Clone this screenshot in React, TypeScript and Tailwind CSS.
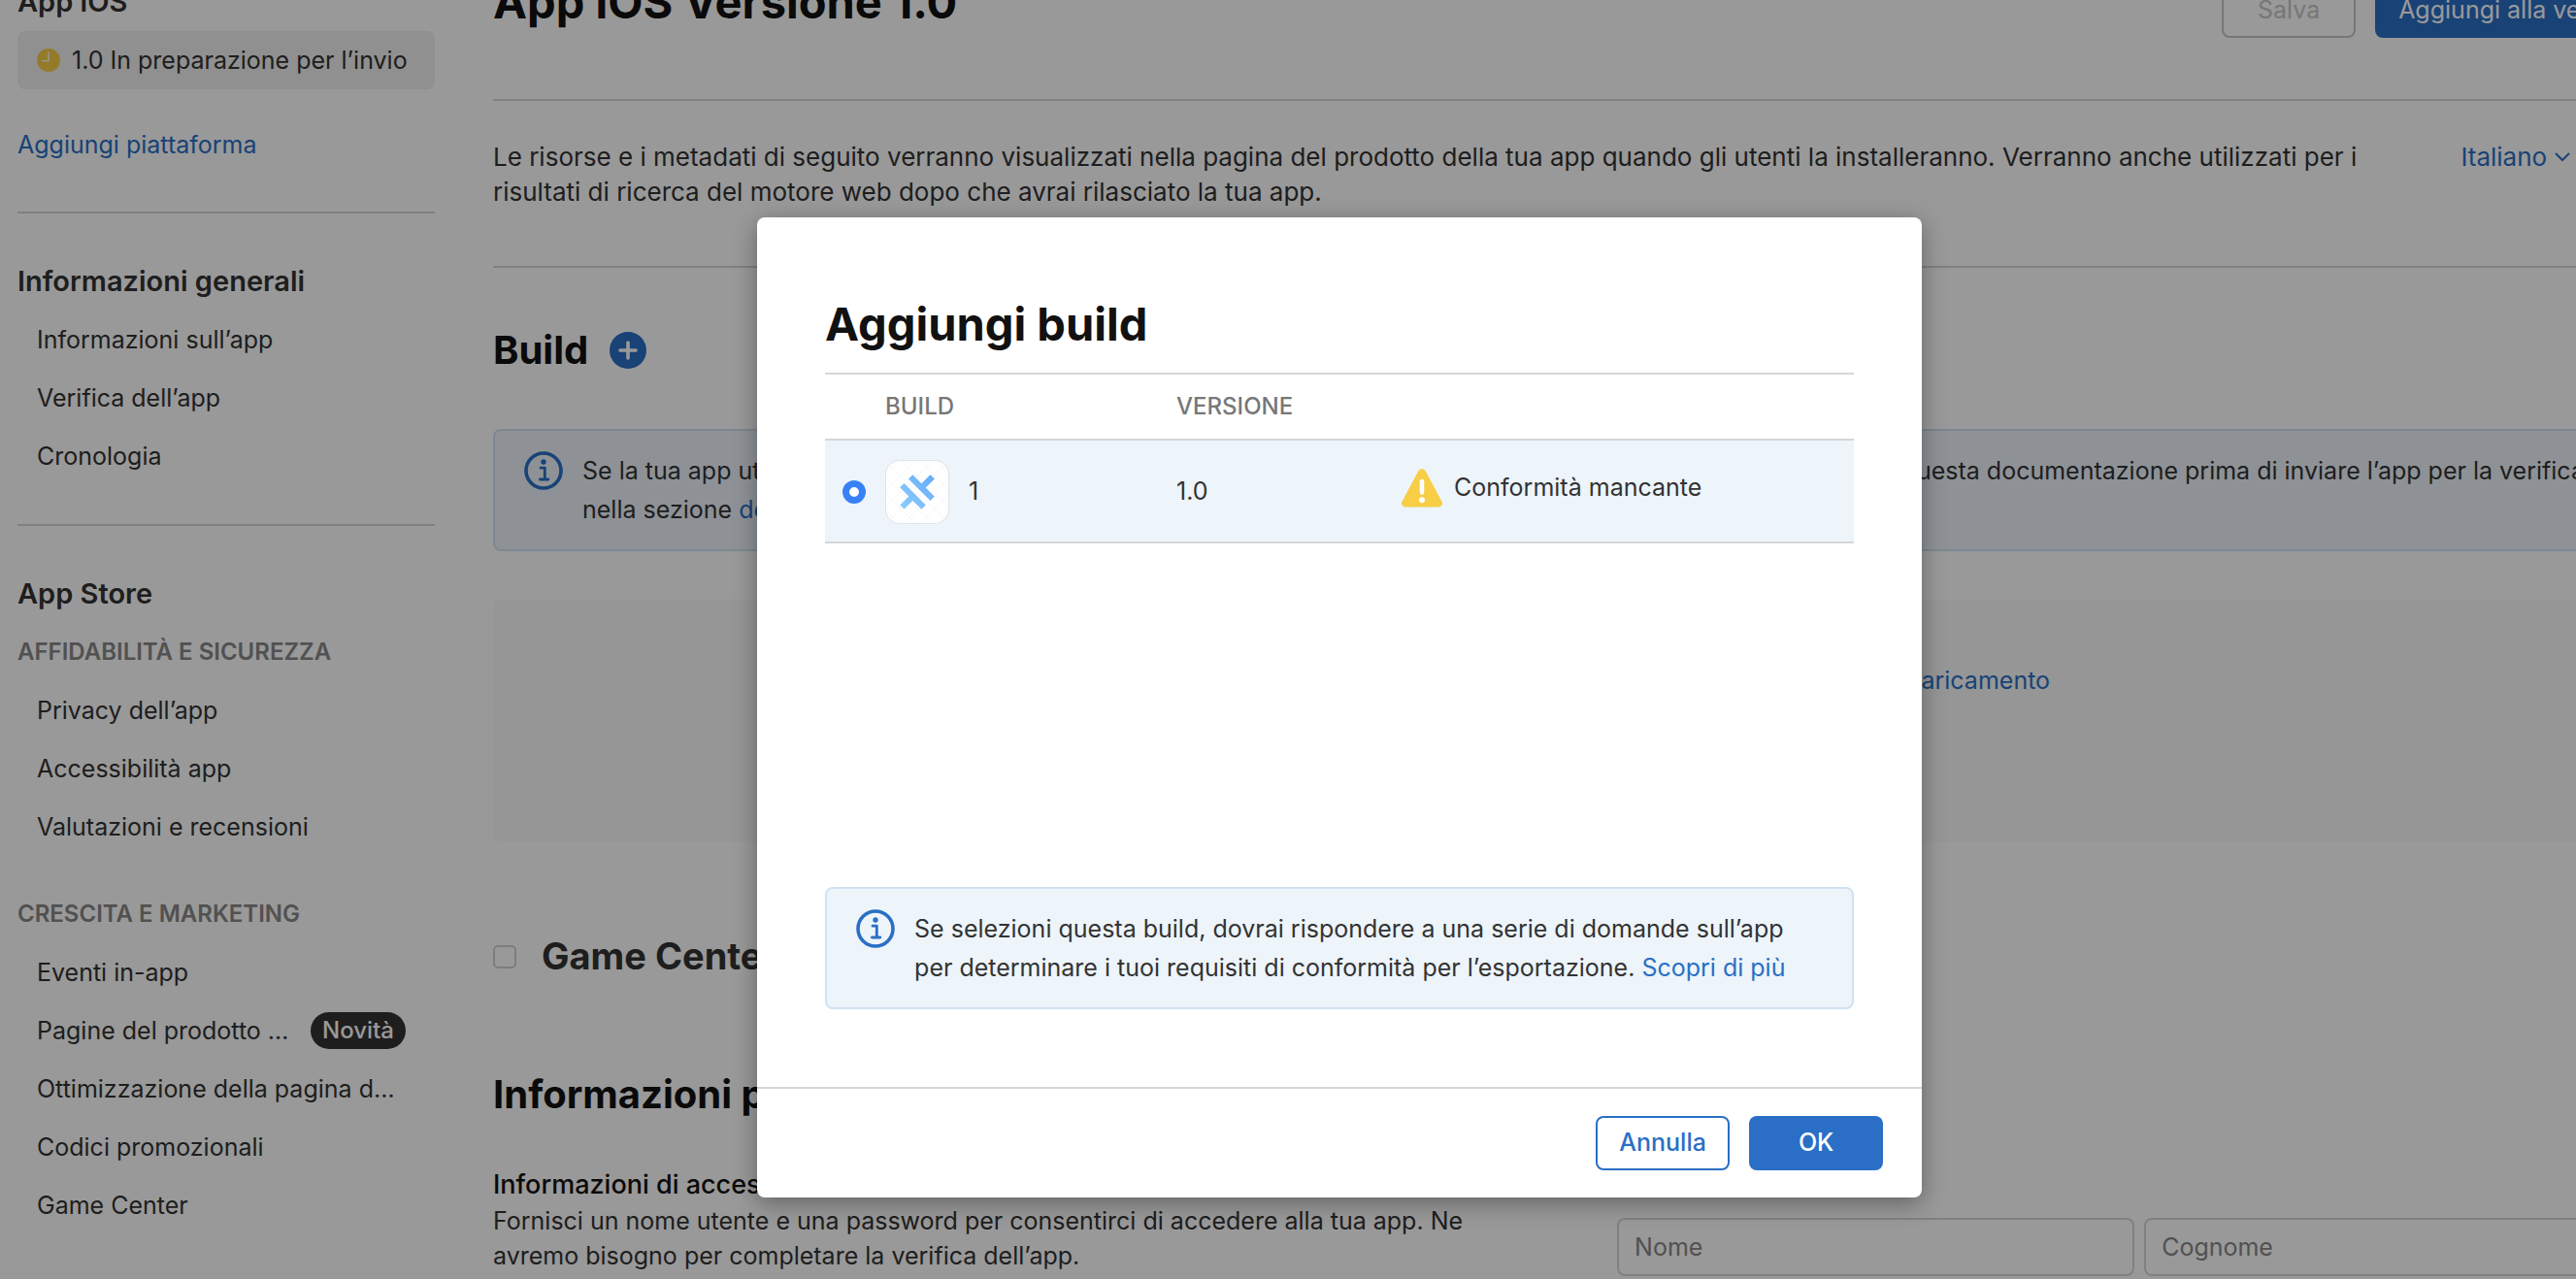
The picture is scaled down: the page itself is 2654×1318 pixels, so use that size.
import type { ReactNode } from "react";

function InfoIcon() {
  return (
    <svg viewBox="0 0 40 40" className="size-10 shrink-0" aria-hidden="true">
      <circle cx="20" cy="20" r="18" fill="none" stroke="#2a6fc5" strokeWidth="3.6" />
      <circle cx="20" cy="11" r="2.7" fill="#2a6fc5" />
      <path
        d="M17 17.2h4.3v11.6M16.400 29h8.400"
        fill="none"
        stroke="#2a6fc5"
        strokeWidth="2.8"
        strokeLinecap="round"
        strokeLinejoin="round"
      />
    </svg>
  );
}

function ClockIcon() {
  return (
    <svg viewBox="0 0 24 24" className="size-6 shrink-0" aria-hidden="true">
      <circle cx="12" cy="12" r="12" fill="#f7ce46" />
      <path d="M12 4v8.6H5.5" fill="none" stroke="#fff" strokeWidth="1.4" strokeLinecap="round" />
    </svg>
  );
}

function HelpIcon() {
  return (
    <svg viewBox="0 0 26 26" className="size-6 shrink-0" aria-hidden="true">
      <circle cx="13" cy="13" r="12" fill="#999" />
      <path
        d="M9.5 10a3.5 3.5 0 1 1 5 3.1c-1 .6-1.5 1.1-1.5 2.4"
        fill="none"
        stroke="#fff"
        strokeWidth="2"
        strokeLinecap="round"
      />
      <circle cx="13" cy="19" r="1.3" fill="#fff" />
    </svg>
  );
}

function WarningIcon() {
  return (
    <svg viewBox="0 0 42 40" className="h-10 w-[42px] shrink-0" aria-hidden="true">
      <path
        d="M17.4 2.2a4.2 4.2 0 0 1 7.2 0l16.7 31.2a4 4 0 0 1-3.6 6.2H4.3a4 4 0 0 1-3.6-6.2z"
        fill="#f7ce46"
      />
      <path d="M21 13v11.5" stroke="#fff" strokeWidth="4.6" strokeLinecap="round" />
      <circle cx="21" cy="32.3" r="3" fill="#fff" />
    </svg>
  );
}

function AppIcon() {
  return (
    <svg viewBox="0 0 196 196" className="size-[66px] shrink-0" role="img" aria-label="Icona app">
      <defs>
        <linearGradient id="logo" x1="45" y1="151" x2="151" y2="45" gradientUnits="userSpaceOnUse">
          <stop offset="0" stopColor="#90cffc" />
          <stop offset="1" stopColor="#62aaf9" />
        </linearGradient>
        <clipPath id="tile">
          <rect x="2" y="2" width="192" height="192" rx="42" />
        </clipPath>
      </defs>
      <rect x="1.5" y="1.5" width="193" height="193" rx="43" fill="#fff" stroke="#dfe3e8" strokeWidth="3" />
      <g clipPath="url(#tile)" stroke="#f1f2f5" strokeWidth="2">
        <path d="M-20 62L62 -20M-20 114L114 -20M-20 166L166 -20M-20 218L218 -20M30 220L220 30M82 220L220 82M134 220L220 134" />
        <path d="M134 -20L216 62M82 -20L216 114M30 -20L216 166M-22 -20L218 218M-20 30L166 216M-20 82L114 216M-20 134L62 216" />
      </g>
      <g fill="url(#logo)">
        <path d="M84 45l27 27 27-27 13 13-27 27 27 27-13 13-67-67z" />
        <path d="M58 71l66 67-13 13-27-26-26 26-13-13 27-27-27-27z" />
      </g>
    </svg>
  );
}

function Notice({ children }: { children: ReactNode }) {
  return (
    <div className="flex gap-5 rounded-lg border-2 border-[#cfe2f3] bg-[#edf4fa] px-[30px] py-[21px]">
      <InfoIcon />
      <p className="leading-10">{children}</p>
    </div>
  );
}

function NavLinks({ items }: { items: { label: string; badge?: string }[] }) {
  return (
    <ul>
      {items.map((item) => (
        <li key={item.label} className="flex h-15 items-center gap-4 pr-[30px] pl-5">
          <a href="#" className="truncate leading-[58px]">
            {item.label}
          </a>
          {item.badge && (
            <span className="shrink-0 rounded-full bg-[#333] px-3 text-2xl leading-[38px] font-medium text-white">
              {item.badge}
            </span>
          )}
        </li>
      ))}
    </ul>
  );
}

function Sidebar() {
  return (
    <nav aria-label="App" className="-mt-7 w-[430px] shrink-0 leading-[60px]">
      <h2 className="text-[29px] leading-15 font-semibold">App iOS</h2>
      <a href="#" className="flex h-15 items-center gap-3 rounded-lg bg-[#f0f0f0] pl-5 whitespace-nowrap">
        <ClockIcon />
        1.0 In preparazione per l’invio
      </a>
      <a href="#" className="mt-7 block leading-[58px] text-[#2a6fc5]">
        Aggiungi piattaforma
      </a>
      <hr className="mt-10 mb-10 border-t-2 border-[#d6d6d6]" />
      <h2 className="text-[29px] leading-15 font-semibold">Informazioni generali</h2>
      <NavLinks
        items={[{ label: "Informazioni sull’app" }, { label: "Verifica dell’app" }, { label: "Cronologia" }]}
      />
      <hr className="my-10 border-t-2 border-[#d6d6d6]" />
      <h2 className="text-[29px] leading-15 font-semibold">App Store</h2>
      <h3 className="text-2xl leading-15 font-semibold text-[#888]">AFFIDABILITÀ E SICUREZZA</h3>
      <NavLinks
        items={[{ label: "Privacy dell’app" }, { label: "Accessibilità app" }, { label: "Valutazioni e recensioni" }]}
      />
      <h3 className="mt-[30px] text-2xl leading-15 font-semibold text-[#888]">CRESCITA E MARKETING</h3>
      <NavLinks
        items={[
          { label: "Eventi in-app" },
          { label: "Pagine del prodotto personalizzate", badge: "Novità" },
          { label: "Ottimizzazione della pagina del prodotto" },
          { label: "Codici promozionali" },
          { label: "Game Center" },
        ]}
      />
    </nav>
  );
}

function VersionPage() {
  return (
    <main className="-mt-[18px] min-w-0 flex-1">
      <header className="flex items-baseline border-b-2 border-[#d6d6d6] pb-[63px]">
        <h1 className="flex-1 text-[47px] leading-10 font-bold text-[#111]">App iOS Versione 1.0</h1>
        <button
          type="button"
          disabled
          className="h-14 w-[138px] rounded-lg border-2 border-[#c6c6c6] text-[#c6c6c6]"
        >
          Salva
        </button>
        <button type="button" className="ml-5 h-14 rounded-lg bg-[#2a6fc5] px-6 text-white">
          Aggiungi alla verifica
        </button>
      </header>

      <div className="flex items-start justify-between border-b-2 border-[#d6d6d6] pt-10 pb-[58px] text-[26px] leading-9">
        <p className="max-w-[1940px]">
          Le risorse e i metadati di seguito verranno visualizzati nella pagina del prodotto della tua app quando gli
          utenti la installeranno. Verranno anche utilizzati per i risultati di ricerca del motore web dopo che avrai
          rilasciato la tua app.
        </p>
        <button type="button" className="mr-[94px] flex items-center gap-2 text-[#2a6fc5]">
          Italiano
          <svg viewBox="0 0 16 10" className="h-2.5 w-4" aria-hidden="true">
            <path d="M1.5 1.5L8 8l6.500-6.500" fill="none" stroke="currentColor" strokeWidth="2" strokeLinecap="round" />
          </svg>
        </button>
      </div>

      <div className="mt-[61px] flex h-12 items-center gap-[22px]">
        <h2 className="text-[40px] leading-10 font-bold text-[#111]">Build</h2>
        <button type="button" aria-label="Aggiungi build">
          <svg viewBox="0 0 38 38" className="size-[38px]" aria-hidden="true">
            <circle cx="19" cy="19" r="19" fill="#2a6fc5" />
            <path d="M19 11v16M11 19h16" stroke="#fff" strokeWidth="3.6" strokeLinecap="round" />
          </svg>
        </button>
      </div>

      <div className="mt-[57px]">
        <Notice>
          Se la tua app utilizza la crittografia, potresti dover fornire della documentazione aggiuntiva sulla
          conformità. Carica questa documentazione prima di inviare l’app per la verifica
          <br />
          nella sezione <a href="#" className="text-[#2a6fc5]">documentazione sulla crittografia dell’app</a>.
        </Notice>
      </div>

      <div className="mt-[50px] h-[250px] rounded-lg bg-[#fafafa] pt-[65px] text-center leading-9">
        <p>
          Carica le tue build usando uno dei vari strumenti.{" "}
          <a href="#" className="text-[#2a6fc5]">
            Esplora strumenti di caricamento
          </a>
        </p>
      </div>

      <label className="mt-[94px] flex h-12 items-center gap-[26px] text-[38px] font-bold">
        <input
          type="checkbox"
          className="size-6 appearance-none rounded-[5px] border-2 border-[#d0d0d0] bg-white"
        />
        Game Center
      </label>

      <h2 className="mt-[94px] text-[40px] leading-12 font-bold text-[#111]">Informazioni per la verifica dell’app</h2>

      <div className="mt-[51px] grid grid-cols-[1158fr_1076fr] leading-9">
        <div>
          <h3 className="mb-px flex items-center gap-2 text-[27px] font-medium text-[#111]">
            Informazioni di accesso <HelpIcon />
          </h3>
          <p className="max-w-[1080px]">
            Fornisci un nome utente e una password per consentirci di accedere alla tua app. Ne avremo bisogno per
            completare la verifica dell’app.
          </p>
        </div>
        <div>
          <h3 className="flex items-center gap-2 text-[27px] font-medium text-[#111]">
            Contatti <HelpIcon />
          </h3>
          <div className="mt-4 flex gap-2.5">
            <input
              aria-label="Nome"
              placeholder="Nome"
              className="h-15 min-w-0 flex-1 rounded-lg border-2 border-[#d6d6d6] px-4 placeholder:text-[#888]"
            />
            <input
              aria-label="Cognome"
              placeholder="Cognome"
              className="h-15 min-w-0 flex-1 rounded-lg border-2 border-[#d6d6d6] px-4 placeholder:text-[#888]"
            />
          </div>
        </div>
      </div>
    </main>
  );
}

function BuildTable() {
  return (
    <table className="w-full table-fixed border-y-2 border-[#d6d6d6] text-left">
      <thead>
        <tr className="h-[68px] border-b-2 border-[#d6d6d6] text-2xl text-[#777]">
          <th className="w-[62px]" />
          <th scope="col" className="w-[300px] font-medium">
            BUILD
          </th>
          <th scope="col" className="w-[232px] font-medium">
            VERSIONE
          </th>
          <th />
        </tr>
      </thead>
      <tbody>
        <tr className="h-[106px] bg-[#edf4fa]">
          <td className="pt-0.5">
            <input
              type="radio"
              name="build"
              aria-label="Build 1"
              defaultChecked
              className="ml-[18px] block size-6 appearance-none rounded-full border-[7px] border-[#3880f6] bg-white"
            />
          </td>
          <td className="pt-0.5">
            <span className="flex items-center gap-5">
              <AppIcon />1
            </span>
          </td>
          <td className="pt-0.5">1.0</td>
          <td className="pt-0.5">
            <span className="-mt-2 flex items-center gap-3">
              <WarningIcon />
              Conformità mancante
            </span>
          </td>
        </tr>
      </tbody>
    </table>
  );
}

function AddBuildDialog() {
  return (
    <div
      role="dialog"
      aria-modal="true"
      aria-labelledby="dialog-title"
      className="flex min-h-[1010px] w-[1200px] flex-col rounded-lg bg-white shadow-[0_6px_24px_rgba(0,0,0,0.35)]"
    >
      <div className="flex flex-1 flex-col px-[70px] pt-20 pb-20">
        <h2 id="dialog-title" className="mb-5 text-[47px] leading-15 font-bold text-[#111]">
          Aggiungi build
        </h2>
        <BuildTable />
        <div className="mt-auto">
          <Notice>
            Se selezioni questa build, dovrai rispondere a una serie di domande sull’app per determinare i tuoi
            requisiti di conformità per l’esportazione.{" "}
            <a href="#" className="text-[#2a6fc5]">
              Scopri di più
            </a>
          </Notice>
        </div>
      </div>
      <footer className="flex justify-end gap-5 border-t-2 border-[#d6d6d6] px-10 py-7 font-medium">
        <button type="button" className="h-14 w-[138px] rounded-lg border-2 border-[#2a6fc5] text-[#2a6fc5]">
          Annulla
        </button>
        <button type="button" className="h-14 w-[138px] rounded-lg bg-[#2a6fc5] text-white">
          OK
        </button>
      </footer>
    </div>
  );
}

export default function App() {
  return (
    <div className="h-screen overflow-hidden bg-white font-['Inter',sans-serif] text-[25px] text-[#333]">
      <div className="relative h-full w-[104%]">
        <div className="flex gap-15 px-[18px]">
          <Sidebar />
          <VersionPage />
        </div>
        <div className="absolute inset-0 flex items-start justify-center bg-black/40 pt-56">
          <AddBuildDialog />
        </div>
      </div>
    </div>
  );
}
